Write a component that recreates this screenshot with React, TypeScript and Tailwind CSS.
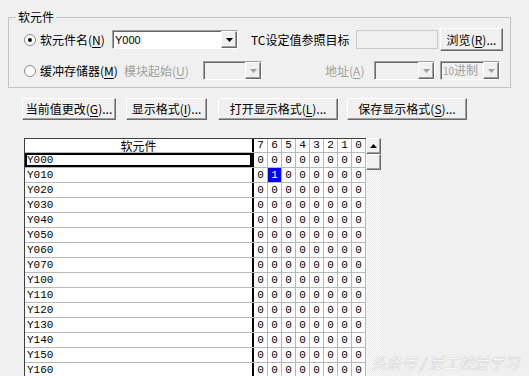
import type { ReactNode } from 'react'

// 软元件批量监视 — classic Win32 dialog look
const ROWS = ['Y000', 'Y010', 'Y020', 'Y030', 'Y040', 'Y050', 'Y060', 'Y070', 'Y100', 'Y110', 'Y120', 'Y130', 'Y140', 'Y150', 'Y160']
const BITS = [7, 6, 5, 4, 3, 2, 1, 0]

const RAISED =
  'border border-t-white border-l-white border-r-[#696969] border-b-[#696969] shadow-[inset_-1px_-1px_0_#a0a0a0] bg-[#f0f0f0]'
const SUNKEN =
  'border border-t-[#a0a0a0] border-l-[#a0a0a0] border-r-white border-b-white shadow-[inset_1px_1px_0_#696969]'

function Mn({ text, k, tail = '' }: { text: string; k: string; tail?: string }) {
  return (
    <span className="whitespace-nowrap">
      {text}(<span className="underline underline-offset-2">{k}</span>){tail}
    </span>
  )
}

function Radio({ checked }: { checked?: boolean }) {
  return (
    <span className="w-[12px] h-[12px] rounded-full bg-white border border-[#8a8a8a] flex items-center justify-center shrink-0">
      {checked && <span className="w-[4px] h-[4px] rounded-full bg-black" />}
    </span>
  )
}

function Tri({ up, disabled }: { up?: boolean; disabled?: boolean }) {
  return (
    <svg width="7" height="4" viewBox="0 0 7 4">
      <polygon points={up ? '0,4 7,4 3.5,0' : '0,0 7,0 3.5,4'} fill={disabled ? '#a0a0a0' : '#000'} />
    </svg>
  )
}

function Combo({ w, children, disabled }: { w: string; children?: ReactNode; disabled?: boolean }) {
  return (
    <div className={`${w} h-[19px] flex shrink-0 ${SUNKEN} ${disabled ? 'bg-[#f0f0f0]' : 'bg-white'}`}>
      <div className="flex-1 flex items-center pl-[2px] overflow-hidden">{children}</div>
      <div className={`w-[16px] h-full flex items-center justify-center ${RAISED}`}>
        <Tri disabled={disabled} />
      </div>
    </div>
  )
}

function Btn({ w, children, h = 'h-[22px]' }: { w: string; children: ReactNode; h?: string }) {
  return <button className={`${w} ${h} ${RAISED} flex items-center justify-center text-[12px] leading-[14px] shrink-0`}>{children}</button>
}

export default function App() {
  return (
    <div className="relative w-[529px] h-[376px] overflow-hidden bg-[#f0f0f0] text-black text-[12px] leading-[14px] font-['Microsoft_YaHei','Noto_Sans_CJK_SC',sans-serif]">
      <fieldset className="ml-[8px] mt-[10px] w-[503px] h-[78px] border border-[#c4c4c4]">
        <legend className="ml-[7px] px-[2px] leading-[14px]">软元件</legend>

        <div className="flex items-center h-[23px] mt-[4px]">
          <span className="ml-[15px]"><Radio checked /></span>
          <span className="ml-[4px] w-[72px]"><Mn text="软元件名" k="N" /></span>
          <Combo w="w-[126px]">
            <span className="text-[11px] font-['Liberation_Sans',sans-serif]">Y000</span>
          </Combo>
          <span className="ml-[13px] w-[105px] whitespace-nowrap">TC设定值参照目标</span>
          <div className="w-[82px] h-[19px] bg-[#f0f0f0] border border-[#c8c8c8]" />
          <span className="ml-[2px]">
            <Btn w="w-[63px]" h="h-[23px]"><Mn text="浏览" k="R" tail="..." /></Btn>
          </span>
        </div>

        <div className="flex items-center h-[21px] mt-[9px]">
          <span className="ml-[15px]"><Radio /></span>
          <span className="ml-[4px] w-[84px]"><Mn text="缓冲存储器" k="M" /></span>
          <span className="w-[79px] text-[#a0a0a0]"><Mn text="模块起始" k="U" /></span>
          <Combo w="w-[59px]" disabled />
          <span className="ml-[63px] w-[49px] text-[#a0a0a0]"><Mn text="地址" k="A" /></span>
          <Combo w="w-[61px]" disabled />
          <span className="ml-[5px]">
            <Combo w="w-[60px]" disabled>
              <span className="text-[#a0a0a0] whitespace-nowrap"><span className="text-[10px]">10</span>进制</span>
            </Combo>
          </span>
        </div>
      </fieldset>

      <div className="flex mt-[10px]">
        <span className="ml-[22px]"><Btn w="w-[94px]"><Mn text="当前值更改" k="G" tail="..." /></Btn></span>
        <span className="ml-[10px]"><Btn w="w-[81px]"><Mn text="显示格式" k="I" tail="..." /></Btn></span>
        <span className="ml-[11px]"><Btn w="w-[120px]"><Mn text="打开显示格式" k="L" tail="..." /></Btn></span>
        <span className="ml-[9px]"><Btn w="w-[120px]"><Mn text="保存显示格式" k="S" tail="..." /></Btn></span>
      </div>

      <div className="flex mt-[18px] ml-[24px]">
        <div className="w-[342px] bg-white border-l border-t border-[#404040] font-['Liberation_Mono',monospace] text-[11px]">
          <div className="flex h-[14px] border-b border-[#b8b8b8]">
            <div className="w-[229px] border-r-2 border-r-black text-center text-[12px] leading-[13px] font-['Microsoft_YaHei','Noto_Sans_CJK_SC',sans-serif]">
              软元件
            </div>
            {BITS.map((b) => (
              <div key={b} className="w-[14px] border-r border-[#b8b8b8] text-center leading-[13px]">
                {b}
              </div>
            ))}
          </div>
          {ROWS.map((r, i) => (
            <div key={r} className="flex h-[15px] border-b border-[#b8b8b8]">
              <div
                className={`w-[229px] border-r-2 border-r-black pl-[2px] leading-[14px] ${i === 0 ? 'shadow-[inset_0_0_0_2px_#000]' : ''}`}
              >
                {r}
              </div>
              {BITS.map((b) => {
                const on = i === 1 && b === 6
                return (
                  <div
                    key={b}
                    className={`w-[14px] border-r border-[#b8b8b8] text-center leading-[14px] ${on ? 'bg-[#0000ff] text-white' : ''}`}
                  >
                    {on ? 1 : 0}
                  </div>
                )
              })}
            </div>
          ))}
        </div>

        <div className="w-[15px] h-[240px] flex flex-col">
          <div className={`h-[16px] flex items-center justify-center ${RAISED}`}>
            <Tri up />
          </div>
          <div className={`h-[16px] ${RAISED}`} />
          <div className="flex-1 bg-[repeating-conic-gradient(#ffffff_0%_25%,#e6e6e6_0%_50%)] bg-[length:2px_2px]" />
        </div>
      </div>

      <div className="absolute right-[10px] bottom-[5px] text-[15px] leading-[16px] italic text-[#f8f8f8] [text-shadow:0_0_1px_#9a9a9a]">
        头条号 / 爱工控爱学习
      </div>
    </div>
  )
}
